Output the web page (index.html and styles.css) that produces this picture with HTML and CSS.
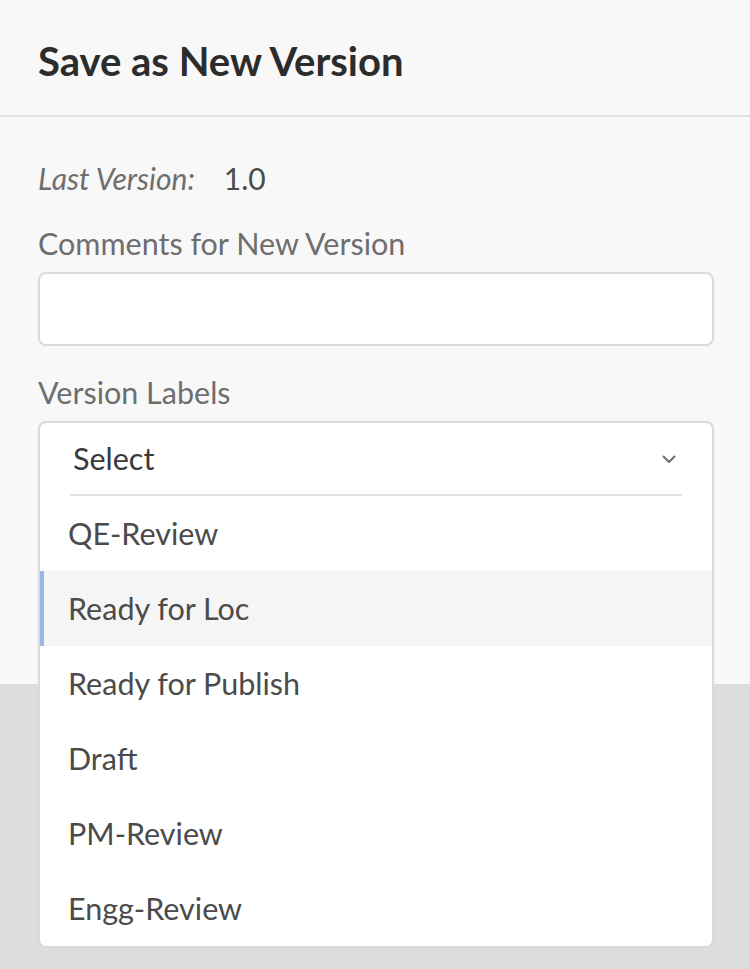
FILE: index.html
```html
<!DOCTYPE html>
<html lang="en">
<head>
<meta charset="utf-8">
<title>Save as New Version</title>
<link rel="stylesheet" href="styles.css">
</head>
<body>
<div class="dialog">
  <header class="dialog-header">
    <h1 class="dialog-title">Save as New Version</h1>
  </header>
  <div class="dialog-body">
    <div class="last-version">
      <span class="last-version-label">Last Version:</span>
      <span class="last-version-value">1.0</span>
    </div>
    <label class="field-label">Comments for New Version</label>
    <div class="text-input"></div>
    <label class="field-label field-label-spaced">Version Labels</label>
    <div class="combo">
      <div class="combo-trigger">
        <span class="combo-value">Select</span>
        <svg class="chevron" width="14" height="9" viewBox="0 0 14 9"><polyline points="1.5,1.5 7,7 12.5,1.5" fill="none" stroke="#6e6e6e" stroke-width="2" stroke-linecap="round" stroke-linejoin="round"/></svg>
      </div>
      <div class="combo-menu">
        <div class="combo-divider"></div>
        <ul class="menu-list">
          <li class="menu-item">QE-Review</li>
          <li class="menu-item is-focused">Ready for Loc</li>
          <li class="menu-item">Ready for Publish</li>
          <li class="menu-item">Draft</li>
          <li class="menu-item">PM-Review</li>
          <li class="menu-item">Engg-Review</li>
        </ul>
      </div>
    </div>
  </div>
</div>
<div class="backdrop"></div>
</body>
</html>
```
FILE: styles.css
```css
* { box-sizing: border-box; }
html, body { margin: 0; padding: 0; }
html { background: #dddddd; }
body {
  min-height: 969px;
  display: flex;
  flex-direction: column;
  background: #dddddd;
  font-family: "Lato", "Open Sans", sans-serif;
  color: #4b4b4b;
}
.dialog {
  background: #f8f8f8;
  height: 684px;
  flex: none;
  position: relative;
  z-index: 2;
}
.backdrop {
  flex: 1;
  background: #dddddd;
  position: relative;
  z-index: 1;
}
.dialog-header {
  height: 117px;
  border-bottom: 2px solid #e1e1e1;
  padding: 0 38px;
  display: flex;
  align-items: center;
}
.dialog-title {
  margin: 0;
  font-size: 40px;
  font-weight: 700;
  color: #2c2c2c;
  line-height: 44px;
  padding-top: 6px;
}
.dialog-body {
  padding: 41px 36px 0 38px;
}
.last-version {
  height: 40px;
  display: flex;
  align-items: center;
  font-size: 30px;
}
.last-version-label {
  font-style: italic;
  color: #6e6e6e;
  margin-right: 29px;
}
.last-version-value {
  color: #4b4b4b;
}
.field-label {
  display: block;
  margin-top: 25px;
  height: 40px;
  line-height: 40px;
  font-size: 30.5px;
  color: #6e6e6e;
}
.field-label-spaced { margin-top: 26px; }
.text-input {
  margin-top: 9px;
  height: 74px;
  background: #fff;
  border: 2px solid #dadada;
  border-radius: 8px;
}
.combo {
  margin-top: 9px;
  position: relative;
}
.combo-trigger {
  height: 71px;
  background: #fff;
  border: 2px solid #dadada;
  border-bottom: none;
  border-radius: 8px 8px 0 0;
  display: flex;
  align-items: center;
  justify-content: space-between;
  padding: 0 36px 0 33px;
}
.combo-value {
  font-size: 30.5px;
  color: #3a3a3a;
  line-height: 40px;
}
.chevron { display: block; margin-top: 4px; }
.combo-menu {
  position: absolute;
  top: 71px;
  left: 0;
  right: 0;
  background: #fff;
  border: 2px solid #dadada;
  border-top: none;
  border-radius: 0 0 8px 8px;
  padding-top: 2px;
  z-index: 5;
}
.combo-divider {
  height: 2px;
  background: #e1e1e1;
  margin: 0 30px 0 30px;
}
.menu-list {
  list-style: none;
  margin: 0;
  padding: 0;
}
.menu-item {
  height: 75px;
  line-height: 75px;
  padding-left: 24px;
  font-size: 30.5px;
  color: #4b4b4b;
  border-left: 4px solid transparent;
}
.menu-item.is-focused {
  background: #f5f5f5;
  border-left-color: #9bb6ea;
}
```
